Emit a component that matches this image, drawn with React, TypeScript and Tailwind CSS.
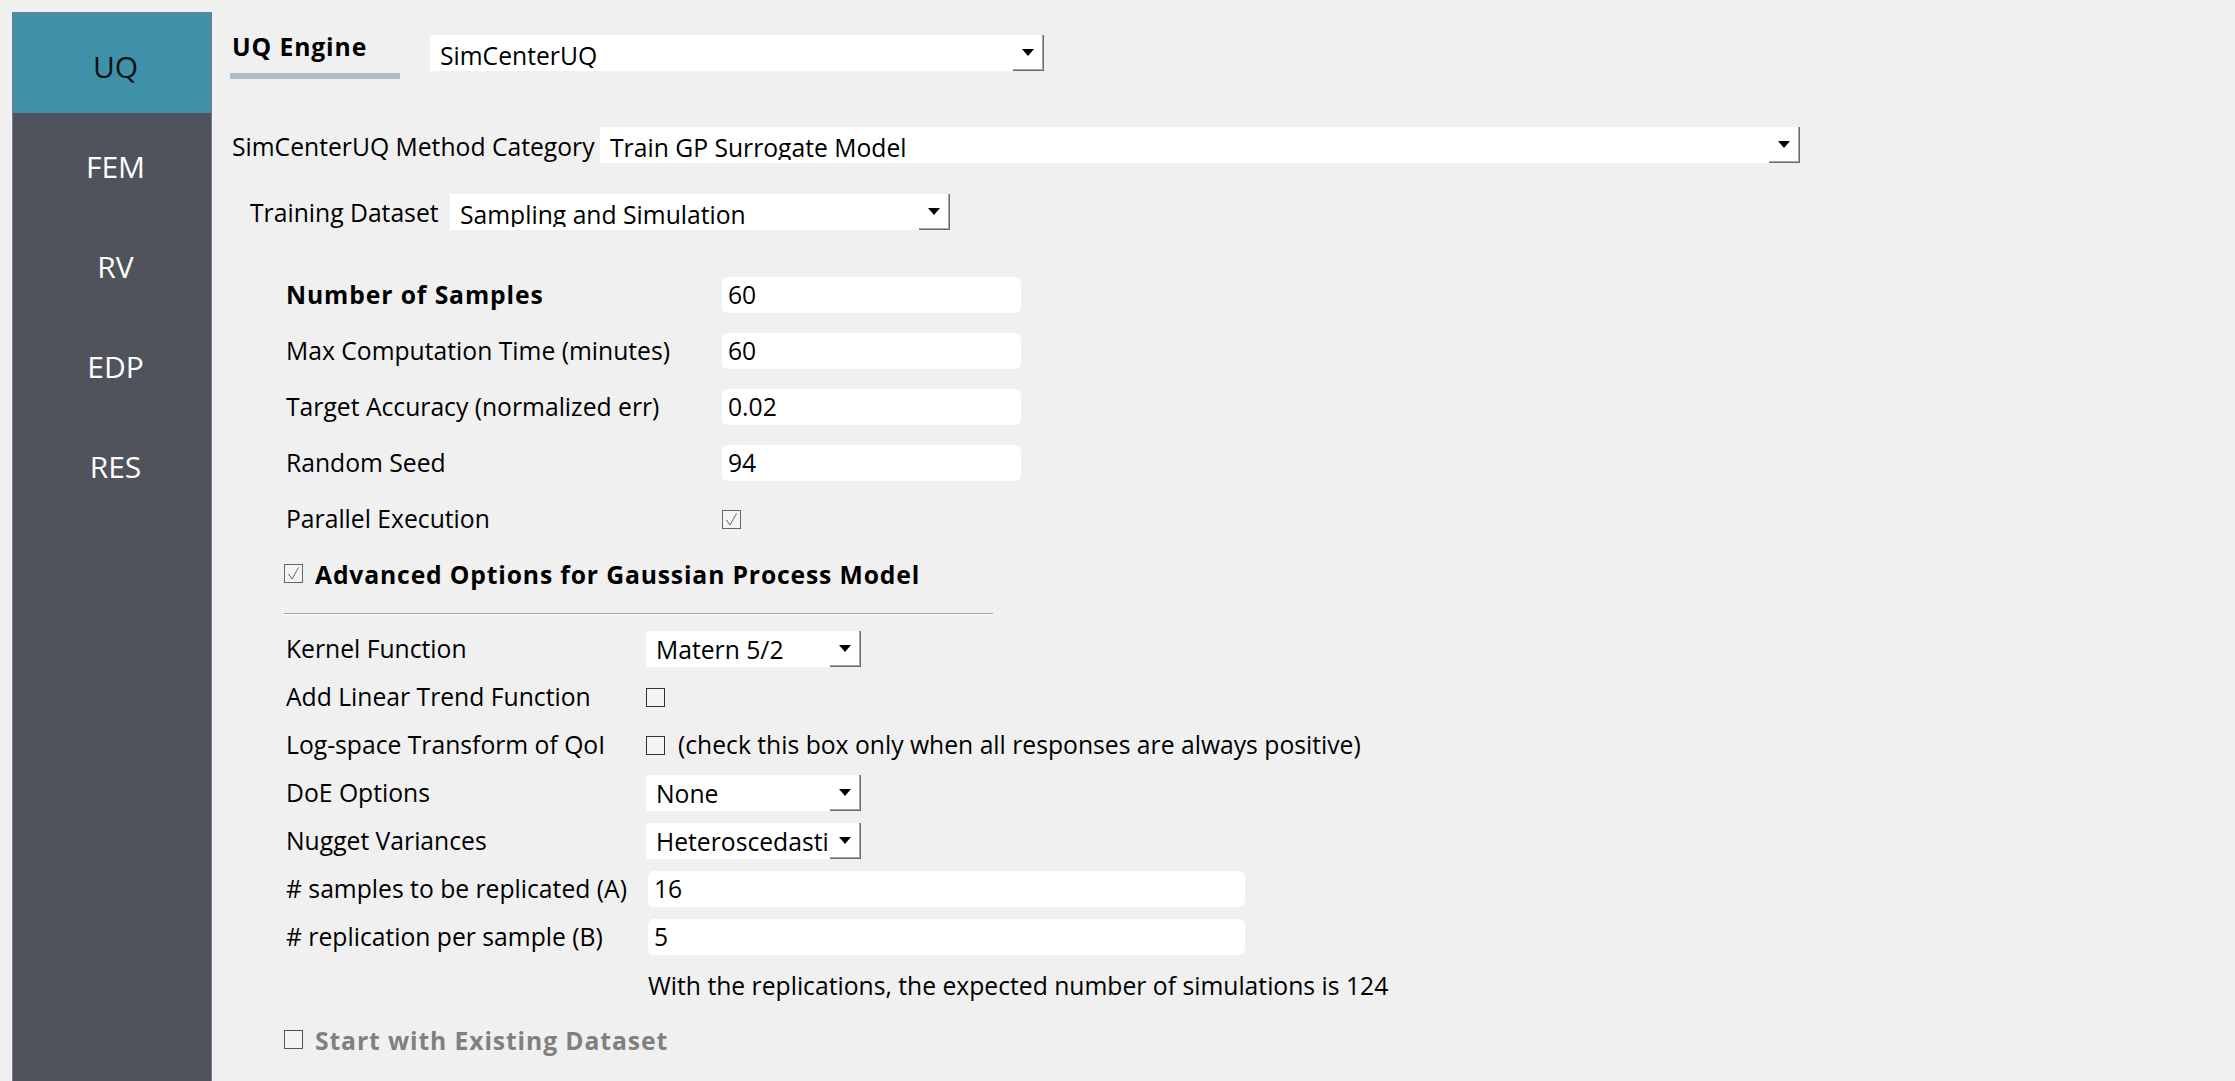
import React from "react";

const font = { fontFamily: '"Open Sans", "Noto Sans", sans-serif' };

const navItems = ["UQ", "FEM", "RV", "EDP", "RES"];

const Arrow = () => (
  <svg width="12" height="7" viewBox="0 0 12 7">
    <polygon points="0,0 12,0 6,7" fill="#000" />
  </svg>
);

const Combo = ({ value, className, low }: { value: string; className: string; low?: boolean }) => (
  <div className={`flex h-[36px] bg-white ${className}`}>
    <div
      className={`flex-1 overflow-hidden whitespace-nowrap pl-[10px] leading-[36px] ${low ? "pt-[3px]" : "pt-[1px]"}`}
    >
      <div className={`overflow-hidden ${low ? "h-[30px]" : "h-[33px]"}`}>{value}</div>
    </div>
    <div className="flex w-[31px] items-center justify-center border-r border-b border-[#6a6a6a] shadow-[inset_-1px_-1px_0_#a8a8a8]">
      <Arrow />
    </div>
  </div>
);

const Input = ({ value, className }: { value: string; className: string }) => (
  <div className={`h-[36px] rounded-[6px] bg-white pl-[6px] leading-[36px] ${className}`}>{value}</div>
);

const Check = ({ checked, dim }: { checked?: boolean; dim?: boolean }) => (
  <div
    className={`flex h-[19px] w-[19px] shrink-0 items-center justify-center border ${
      checked ? "border-[#666]" : dim ? "border-[#555]" : "border-[#333]"
    } bg-[#f4f4f4]`}
  >
    {checked && (
      <svg width="17" height="17" viewBox="0 0 17 17">
        <polyline points="3.5,9 7,14 13.5,2.5" fill="none" stroke="#666" strokeWidth="1" />
      </svg>
    )}
  </div>
);

const FieldRow = ({ label, bold, children }: { label: string; bold?: boolean; children: React.ReactNode }) => (
  <div className="flex h-[36px] items-center">
    <div className={`w-[436px] ${bold ? "font-bold tracking-[0.9px]" : ""}`}>{label}</div>
    {children}
  </div>
);

const AdvRow = ({ label, children }: { label: string; children: React.ReactNode }) => (
  <div className="flex h-[36px] items-center">
    <div className="w-[360px] whitespace-nowrap">{label}</div>
    {children}
  </div>
);

export default function App() {
  return (
    <div
      className="flex h-[1081px] w-[2235px] overflow-hidden bg-[#f0f0f0] text-[24.7px] text-black"
      style={font}
    >
      <div className="ml-[12px] mt-[12px] h-[1080px] w-[200px] border border-[#7b7f88] bg-[#50535b]">
        {navItems.map((item, i) => (
          <div
            key={item}
            className={`flex h-[100px] justify-center pl-[7px] pt-[36px] text-[30px] leading-[36px] ${
              i === 0 ? "bg-[#3e91a8] text-[#111]" : "text-white"
            }`}
          >
            {item}
          </div>
        ))}
      </div>

      <div className="flex flex-1 flex-col pl-[18px]">
        <div className="mt-[35px] flex">
          <div className="w-[170px]">
            <div className="h-[24px] pl-[2px] font-bold leading-[24px] tracking-[0.9px]">UQ Engine</div>
            <div className="mt-[14px] h-[6px] bg-[#b0bec5]" />
          </div>
          <Combo value="SimCenterUQ" className="ml-[30px] w-[614px]" low />
        </div>

        <div className="mt-[48px] flex h-[36px] items-center pl-[2px]">
          <div className="w-[368px] pt-[3px]">SimCenterUQ Method Category</div>
          <Combo value="Train GP Surrogate Model" className="w-[1200px]" low />
        </div>

        <div className="mt-[31px] flex h-[35px] items-center pl-[20px]">
          <div className="w-[200px] pt-[3px]">Training Dataset</div>
          <Combo value="Sampling and Simulation" className="h-[35px] w-[500px]" low />
        </div>

        <div className="mt-[48px] flex flex-col gap-[20px] pl-[56px]">
          <FieldRow label="Number of Samples" bold>
            <Input value="60" className="w-[299px]" />
          </FieldRow>
          <FieldRow label="Max Computation Time (minutes)">
            <Input value="60" className="w-[299px]" />
          </FieldRow>
          <FieldRow label="Target Accuracy (normalized err)">
            <Input value="0.02" className="w-[299px]" />
          </FieldRow>
          <FieldRow label="Random Seed">
            <Input value="94" className="w-[299px]" />
          </FieldRow>
          <FieldRow label="Parallel Execution">
            <Check checked />
          </FieldRow>
        </div>

        <div className="mt-[18px] flex h-[36px] items-center pl-[54px]">
          <Check checked />
          <div className="ml-[12px] pt-[4px] font-bold tracking-[0.85px]">
            Advanced Options for Gaussian Process Model
          </div>
        </div>

        <div className="ml-[54px] mt-[22px] h-[2px] w-[709px] border-t border-b border-t-[#a0a0a0] border-b-white" />

        <div className="mt-[16px] flex flex-col gap-[12px] pl-[56px]">
          <AdvRow label="Kernel Function">
            <Combo value="Matern 5/2" className="w-[215px]" />
          </AdvRow>
          <AdvRow label="Add Linear Trend Function">
            <Check />
          </AdvRow>
          <AdvRow label="Log-space Transform of QoI">
            <Check />
            <div className="ml-[13px] whitespace-nowrap">
              (check this box only when all responses are always positive)
            </div>
          </AdvRow>
          <AdvRow label="DoE Options">
            <Combo value="None" className="w-[215px]" />
          </AdvRow>
          <AdvRow label="Nugget Variances">
            <Combo value="Heteroscedastic" className="w-[215px]" />
          </AdvRow>
          <AdvRow label="# samples to be replicated (A)">
            <Input value="16" className="ml-[2px] w-[597px] pl-[5px]" />
          </AdvRow>
          <AdvRow label="# replication per sample (B)">
            <Input value="5" className="ml-[2px] w-[597px] pl-[5px]" />
          </AdvRow>
        </div>

        <div className="mt-[13px] flex h-[36px] items-center pl-[418px]">
          With the replications, the expected number of simulations is 124
        </div>

        <div className="mt-[17px] flex h-[36px] items-center pl-[54px]">
          <Check dim />
          <div className="ml-[12px] pt-[4px] font-bold tracking-[0.9px] text-[#808080]">
            Start with Existing Dataset
          </div>
        </div>
      </div>
    </div>
  );
}
